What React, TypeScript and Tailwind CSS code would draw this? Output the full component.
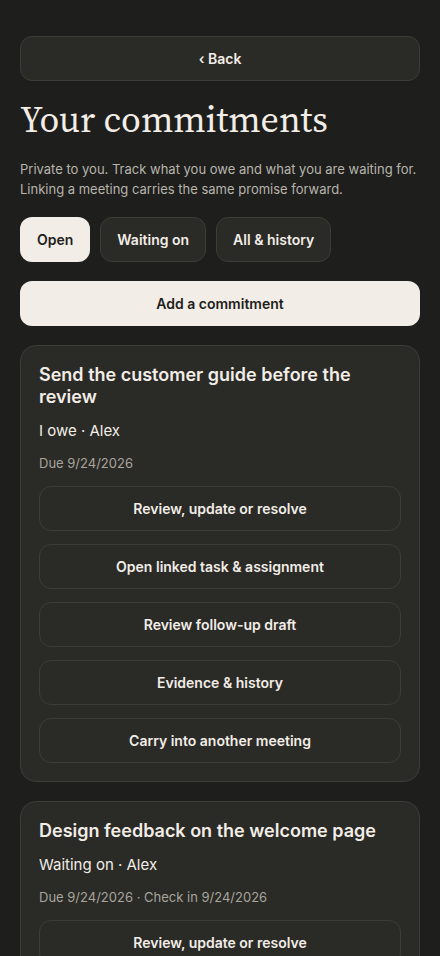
import React from 'react';

const sans = { fontFamily: 'Inter, "Liberation Sans", sans-serif' };

type Item = {
  id: number;
  title: string;
  who: string;
  due: string;
  actions: string[];
};

const ITEMS: Item[] = [
  {
    id: 1,
    title: 'Send the customer guide before the review',
    who: 'I owe · Alex',
    due: 'Due 9/24/2026',
    actions: [
      'Review, update or resolve',
      'Open linked task & assignment',
      'Review follow-up draft',
      'Evidence & history',
      'Carry into another meeting',
    ],
  },
  {
    id: 2,
    title: 'Design feedback on the welcome page',
    who: 'Waiting on · Alex',
    due: 'Due 9/24/2026 · Check in 9/24/2026',
    actions: ['Review, update or resolve', 'Open linked task & assignment'],
  },
];

const App: React.FC = () => {
  return (
    <div className="min-h-screen bg-[#1e1e1c] text-[#f2ede6]" style={sans}>
      <div className="px-5 pt-9 pb-10">
        <button className="w-full h-[45px] rounded-xl border border-[#3d3d38] bg-[#2a2a26] text-[14px] font-semibold text-[#f2ede6]">
          ‹ Back
        </button>

        <h1
          className="mt-[16px] text-[36px] leading-[46px] text-[#f2ede6]"
          style={{ fontFamily: '"Source Serif 4", Georgia, serif' }}
        >
          Your commitments
        </h1>

        <p className="mt-[16px] text-[13px] leading-[20px] text-[#b8b5ad]">
          Private to you. Track what you owe and what you are waiting for. Linking a meeting carries the same promise forward.
        </p>

        <div className="mt-[18px] flex gap-[10px]">
          <button className="h-[45px] px-[17px] rounded-xl bg-[#f2ede6] text-[#1e1e1c] text-[14px] font-semibold">
            Open
          </button>
          <button className="h-[45px] px-4 rounded-xl border border-[#3d3d38] bg-[#2a2a26] text-[14px] font-semibold">
            Waiting on
          </button>
          <button className="h-[45px] px-4 rounded-xl border border-[#3d3d38] bg-[#2a2a26] text-[14px] font-semibold">
            All &amp; history
          </button>
        </div>

        <button className="mt-[19px] w-full h-[45px] rounded-xl bg-[#f2ede6] text-[#1e1e1c] text-[14px] font-semibold">
          Add a commitment
        </button>

        <div className="mt-[19px] flex flex-col gap-[19px]">
          {ITEMS.map((item) => (
            <div key={item.id} className="rounded-2xl border border-[#3d3d38] bg-[#2a2a26] px-[18px] pt-[18px] pb-[18px]">
              <h3 className="text-[18px] leading-[22px] font-semibold">{item.title}</h3>
              <div className="mt-[12px] text-[15px] leading-[22px]">{item.who}</div>
              <div className="mt-[11px] text-[13px] leading-[20px] text-[#a8a59d]">{item.due}</div>
              <div className="mt-[13px] flex flex-col gap-[13px]">
                {item.actions.map((a) => (
                  <button
                    key={a}
                    className="w-full h-[45px] rounded-xl border border-[#3d3d38] text-[14px] font-semibold"
                  >
                    {a}
                  </button>
                ))}
              </div>
            </div>
          ))}
        </div>
      </div>
    </div>
  );
};

export default App;
